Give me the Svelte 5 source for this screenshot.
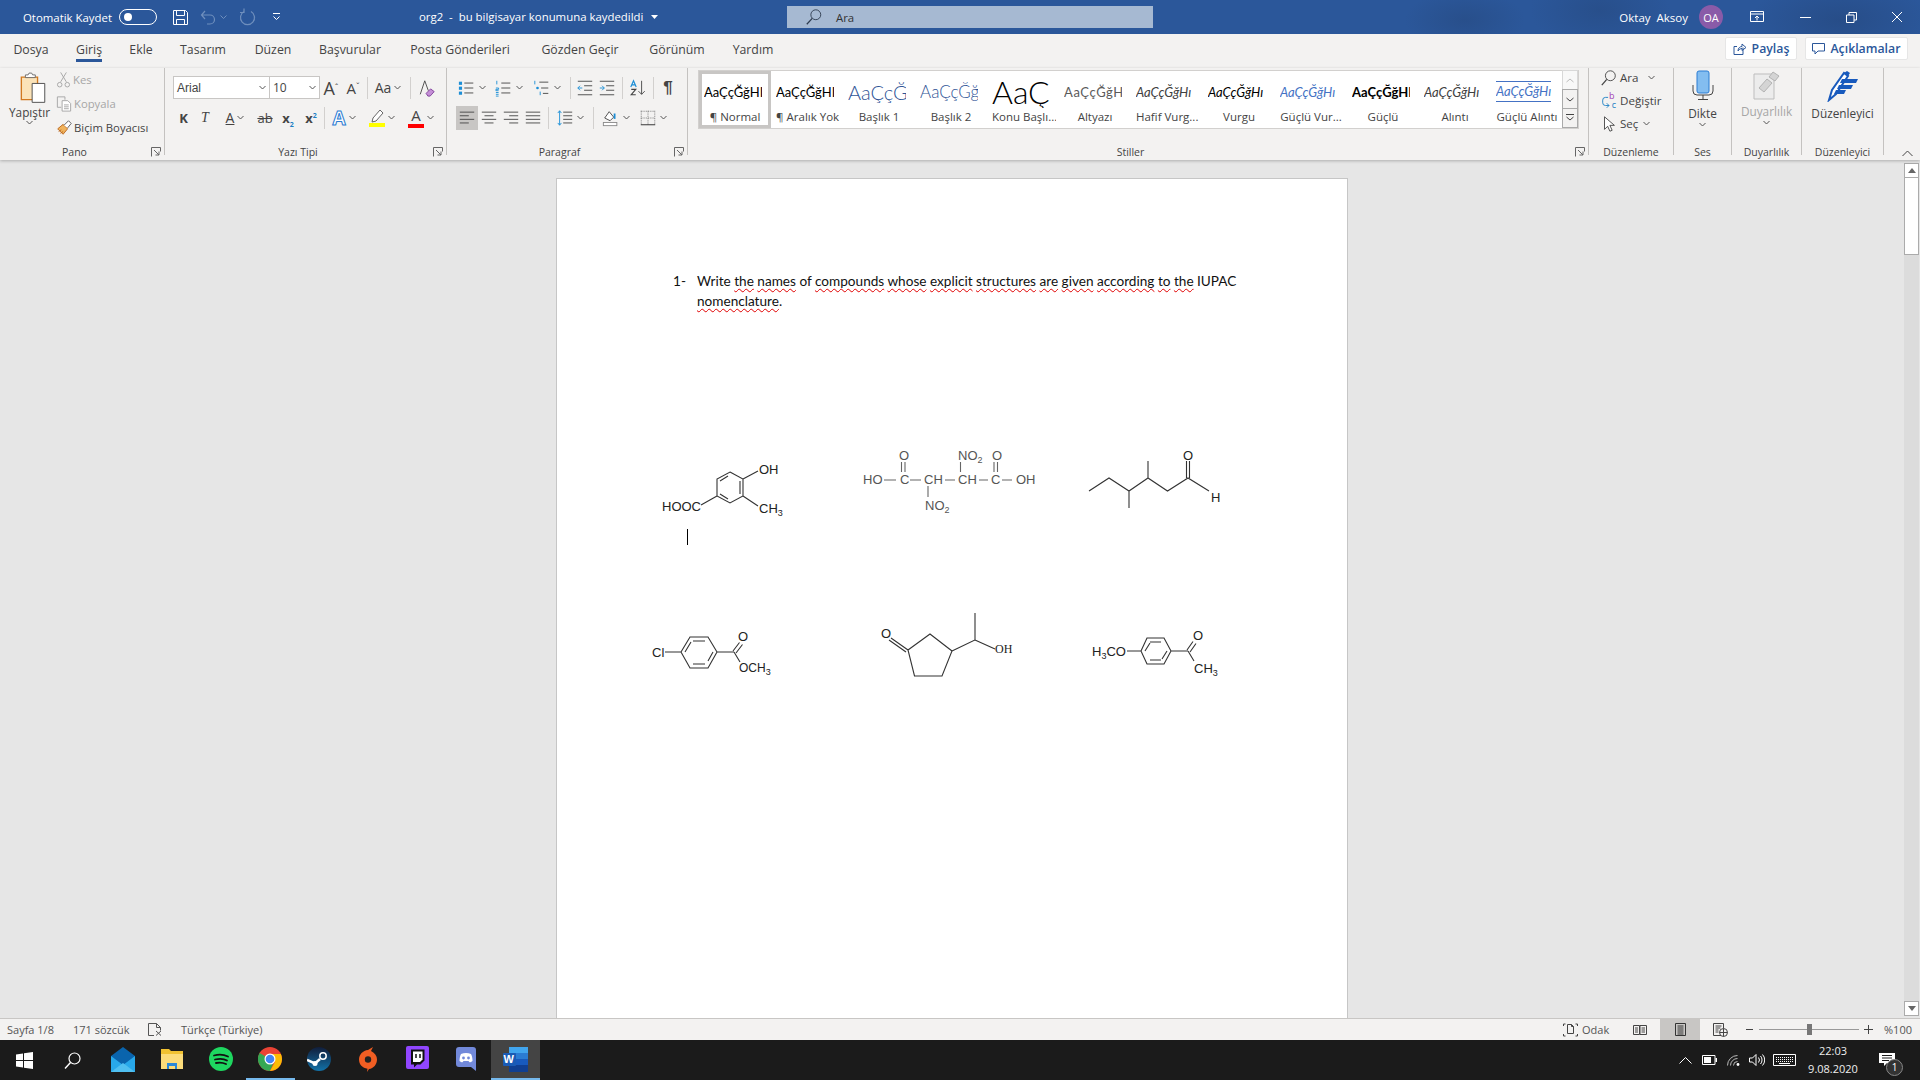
<script>
	const tabs = [
		{ t: 'Dosya', w: 54 },
		{ t: 'Giriş', w: 62, on: true },
		{ t: 'Ekle', w: 42 },
		{ t: 'Tasarım', w: 82 },
		{ t: 'Düzen', w: 58 },
		{ t: 'Başvurular', w: 96 },
		{ t: 'Posta Gönderileri', w: 124 },
		{ t: 'Gözden Geçir', w: 116 },
		{ t: 'Görünüm', w: 78 },
		{ t: 'Yardım', w: 74 }
	];

	const icons = {
		cut: '<path d="M6 2l6 10M12 2L6 12" stroke="#a6a6a6" fill="none"/><circle cx="5" cy="15" r="2.4" stroke="#a6a6a6" fill="none"/><circle cx="13" cy="15" r="2.4" stroke="#a6a6a6" fill="none"/>',
		copy: '<path d="M2.5 2.5h8v3M2.5 2.5v11h4" stroke="#a6a6a6" fill="none"/><path d="M7.5 6.5h6l3 3v8h-9z" fill="#fff" stroke="#a6a6a6"/><path d="M9.5 11h5M9.5 13h5M9.5 15h5" stroke="#a6a6a6"/>',
		brush: '<path d="M3 11l6-5 5 5-5 6z" fill="#f0b35c" stroke="#b9651e"/><path d="M10 7l5-5 3 3-4 5" fill="#fff" stroke="#555"/><path d="M4 14l3-2M6 16l3-2" stroke="#b9651e"/>',
		bullets: '<rect x="1" y="3" width="3.5" height="3.5" fill="#1c8ed6"/><rect x="1" y="8.5" width="3.5" height="3.5" fill="#1c8ed6"/><rect x="1" y="14" width="3.5" height="3.5" fill="#1c8ed6"/><path d="M7 4.5h10M7 10h10M7 15.500h10" stroke="#444"/>',
		numbers: '<path d="M2 2v4M1 10h3v1.500H1V13h3M1 15h3M1 17h3M1 19h3" stroke="#1c8ed6" fill="none"/><path d="M7 4.500h10M7 10h10M7 15.500h10" stroke="#444"/>',
		multi: '<path d="M2 2v4" stroke="#1c8ed6"/><path d="M7 3.500h10M9 10h8M11 16h6" stroke="#444"/><circle cx="5" cy="10" r="1.500" fill="#1c8ed6"/><path d="M8 14v4" stroke="#1c8ed6"/>',
		outdent: '<path d="M2 2.500h16M9 7.500h9M9 12.500h9M2 17.500h16" stroke="#444"/><path d="M7 10H2M4.500 7.500L2 10l2.500 2.500" stroke="#1c8ed6" fill="none"/>',
		indent: '<path d="M2 2.500h16M9 7.500h9M9 12.500h9M2 17.500h16" stroke="#444"/><path d="M2 10h5M4.500 7.500L7 10l-2.500 2.500" stroke="#1c8ed6" fill="none"/>',
		sort: '<path d="M14 2v15M10.500 13.500L14 17l3.500-3.500" stroke="#444" fill="none"/><path d="M2 9l3-7 3 7M3 6.500h4" stroke="#1c8ed6" fill="none" stroke-width="1.300"/><path d="M2.500 11.500h5l-5 6h5" stroke="#444" fill="none" stroke-width="1.300"/>',
		left: '<path d="M2 3.500h16M2 7.500h10M2 11.500h16M2 15.500h10" stroke="#444"/>',
		center: '<path d="M2 3.500h16M5 7.500h10M2 11.500h16M5 15.500h10" stroke="#444"/>',
		right: '<path d="M2 3.500h16M8 7.500h10M2 11.500h16M8 15.500h10" stroke="#444"/>',
		justify: '<path d="M2 3.500h16M2 7.500h16M2 11.500h16M2 15.500h16" stroke="#444"/>',
		spacing: '<path d="M8 3.500h10M8 7.500h10M8 11.500h10M8 15.500h10" stroke="#444"/><path d="M4 2v16M2 4.500L4 2l2 2.500M2 15.500L4 18l2-2.500" stroke="#1c8ed6" fill="none"/>',
		shade: '<path d="M3 10l5-7 5 6-4 4z" fill="#fff" stroke="#444"/><path d="M14 5v6" stroke="#1c8ed6" stroke-width="2"/><rect x="1.500" y="15" width="15" height="3.500" fill="#fff" stroke="#888"/>',
		borders: '<path d="M2 2.500h16M2 10h16M10 2v16M2.500 2v16M17.500 2v16" stroke="#777" stroke-dasharray="1 1"/><path d="M2 17.500h16" stroke="#222"/>',
		eraser: '<path d="M2.500 17L7.500 2l4 11" stroke="#444" fill="none"/><path d="M9 16l5-5 4 3-4.500 5H11z" fill="#c48ed6" stroke="#7d3c98"/>',
		search: '<circle cx="11.500" cy="7.500" r="5.500" stroke="#444" fill="none"/><path d="M7.500 11.500L2 18" stroke="#444" stroke-width="1.400"/>',
		replace: '<text x="10" y="8" font-size="10" fill="#a33fb5" font-family="Open Sans">b</text><text x="13" y="18" font-size="10" fill="#1c7fc4" font-family="Open Sans">c</text><path d="M9 6H6a3 3 0 0 0-3 3v3a3 3 0 0 0 3 3h4M7.500 12.500L10 15l-2.500 2.500" stroke="#1c7fc4" fill="none"/>',
		select: '<path d="M5 2v14l3.500-3.500 2.500 5.500 2.500-1-2.500-5.500H16z" fill="#fff" stroke="#444"/>'
	};

	const fontRow = [
		{ t: 'A', cls: 'grow', w: 20, sup: 'ˆ' },
		{ t: 'A', cls: 'shrink', w: 24, sup: 'ˇ' },
		{ sep: true, w: 5 },
		{ t: 'Aa', w: 36, chev: true },
		{ sep: true, w: 9 },
		{ i: 'eraser', w: 24 }
	];
	const fontRow2 = [
		{ t: 'K', cls: 'bold', w: 21 },
		{ t: 'T', cls: 'ital', w: 22 },
		{ t: 'A', cls: 'under', w: 38, chev: true },
		{ t: 'ab', cls: 'strike', w: 22 },
		{ t: 'x', cls: 'bold', sub: '2', w: 24 },
		{ t: 'x', cls: 'bold', sup2: '2', w: 22 },
		{ sep: true, w: 4 },
		{ t: 'A', cls: 'effect', w: 36, chev: true },
		{ mark: '#ffff00', w: 40, chev: true },
		{ t: 'A', cls: 'colour', w: 38, chev: true }
	];
	const paraRow = [
		{ i: 'bullets', w: 37, chev: true },
		{ i: 'numbers', w: 38, chev: true },
		{ i: 'multi', w: 38, chev: true },
		{ sep: true, w: 8 },
		{ i: 'outdent', w: 22 },
		{ i: 'indent', w: 22 },
		{ sep: true, w: 8 },
		{ i: 'sort', w: 24 },
		{ sep: true, w: 6 },
		{ t: '¶', cls: 'pilcrow', w: 24 }
	];
	const paraRow2 = [
		{ i: 'left', w: 22, on: true },
		{ i: 'center', w: 22 },
		{ i: 'right', w: 22 },
		{ i: 'justify', w: 22 },
		{ sep: true, w: 8 },
		{ i: 'spacing', w: 36, chev: true },
		{ sep: true, w: 10 },
		{ i: 'shade', w: 36, chev: true },
		{ i: 'borders', w: 38, chev: true }
	];

	const styles = [
		{ p: 'AaÇçĞğHIı', l: '¶ Normal', cls: 'normal', on: true },
		{ p: 'AaÇçĞğHIı', l: '¶ Aralık Yok', cls: 'normal' },
		{ p: 'AaÇçĞğ', l: 'Başlık 1', cls: 'h1' },
		{ p: 'AaÇçĞğH', l: 'Başlık 2', cls: 'h2' },
		{ p: 'AaÇ', l: 'Konu Başlı...', cls: 'title' },
		{ p: 'AaÇçĞğH', l: 'Altyazı', cls: 'sub' },
		{ p: 'AaÇçĞğHı', l: 'Hafif Vurg...', cls: 'soft' },
		{ p: 'AaÇçĞğHı', l: 'Vurgu', cls: 'em' },
		{ p: 'AaÇçĞğHı', l: 'Güçlü Vur...', cls: 'strongem' },
		{ p: 'AaÇçĞğHI', l: 'Güçlü', cls: 'strong' },
		{ p: 'AaÇçĞğHı', l: 'Alıntı', cls: 'quote' },
		{ p: 'AaÇçĞğHı', l: 'Güçlü Alıntı', cls: 'iquote' }
	];

	const apps = ['mail', 'folder', 'spotify', 'chrome', 'steam', 'origin', 'twitch', 'discord', 'word'];
</script>

{#snippet chevron()}
	<svg class="chev" width="7" height="5" viewBox="0 0 7 5"><path d="M.5 1l3 3 3-3" fill="none" stroke="#555" /></svg>
{/snippet}

{#snippet launcher()}
	<svg class="launcher" width="10" height="10" viewBox="0 0 10 10"><path d="M.5 9.500v-9h9v4M3 3l5 5M8 4.500V8H4.500" fill="none" stroke="#666" /></svg>
{/snippet}

{#snippet tools(list)}
	{#each list as b}
		{#if b.sep}
			<span class="tool-sep" style:width="{b.w}px"><i></i></span>
		{:else}
			<span class="tool" class:on={b.on} style:width="{b.w}px">
				{#if b.i}
					<svg width="18" height="18" viewBox="0 0 20 20">{@html icons[b.i]}</svg>
				{:else if b.mark}
					<span class="marker"><svg width="16" height="14" viewBox="0 0 16 14"><path d="M3 13l1-4 7-8 3 3-7 8z" fill="#fff" stroke="#666" /></svg><i style:background={b.mark}></i></span>
				{:else}
					<span class="glyph {b.cls ?? ''}">{b.t}{#if b.sup}<small>{b.sup}</small>{/if}{#if b.sub}<sub>{b.sub}</sub>{/if}{#if b.sup2}<sup>{b.sup2}</sup>{/if}</span>
				{/if}
				{#if b.chev}{@render chevron()}{/if}
			</span>
		{/if}
	{/each}
{/snippet}

<div class="word">
	<header class="titlebar">
		<div class="qat">
			<span class="autosave">Otomatik Kaydet</span>
			<span class="toggle"><i></i></span>
			<svg class="save" width="17" height="17" viewBox="0 0 17 17"><path d="M1.500 1.500h12l2 2v12h-14zM4.500 1.500v5h8v-5M4.500 15.500v-5h8v5" fill="none" stroke="#fff" /></svg>
			<svg class="undo" width="18" height="17" viewBox="0 0 18 17"><path d="M2 6h8a4 4 0 0 1 0 9H7M5 2L1.500 6 5 10" fill="none" stroke="#6f8fbd" stroke-width="1.200" /></svg>
			<svg class="smallchev" width="7" height="4" viewBox="0 0 7 4"><path d="M.5.500l3 3 3-3" fill="none" stroke="#6f8fbd" /></svg>
			<svg class="redo" width="17" height="18" viewBox="0 0 17 18"><path d="M12 3.500a7 7 0 1 1-7 0M5 .5v4H1" fill="none" stroke="#6f8fbd" stroke-width="1.200" /></svg>
			<svg class="custom" width="9" height="8" viewBox="0 0 9 8"><path d="M1 .5h7M1.500 3.500l3 3 3-3" fill="none" stroke="#fff" /></svg>
		</div>
		<div class="doc">org2 &nbsp;-&nbsp; bu bilgisayar konumuna kaydedildi<svg width="7" height="4" viewBox="0 0 7 4"><path d="M0 0h7L3.500 4z" fill="#fff" /></svg></div>
		<div class="searchbox">
			<svg width="18" height="18" viewBox="0 0 20 20"><circle cx="12" cy="7.500" r="5.500" fill="none" stroke="#2e3b4e" /><path d="M8 11.500L2 18" stroke="#2e3b4e" stroke-width="1.400" /></svg>
			<span>Ara</span>
		</div>
		<div class="right">
			<span class="user">Oktay &nbsp;Aksoy</span>
			<span class="avatar">OA</span>
			<svg class="display" width="14" height="12" viewBox="0 0 14 12"><path d="M.5.500h13v10H.5zM.5 3h13M7 9.500V5M5 7l2-2 2 2" fill="none" stroke="#fff" /></svg>
			<span class="winbtn"><svg width="11" height="11" viewBox="0 0 11 11"><path d="M0 5.500h11" stroke="#fff" /></svg></span>
			<span class="winbtn"><svg width="11" height="11" viewBox="0 0 11 11"><path d="M.5 3h7.500v7.500H.5zM3 3V.5h7.500V8H8" fill="none" stroke="#fff" /></svg></span>
			<span class="winbtn"><svg width="12" height="12" viewBox="0 0 12 12"><path d="M1 1l10 10M11 1L1 11" stroke="#fff" /></svg></span>
		</div>
	</header>

	<nav class="tabs">
		<div class="tablist">
			{#each tabs as tab}
				<span class="tab" class:active={tab.on} style:width="{tab.w}px"><span>{tab.t}</span></span>
			{/each}
		</div>
		<div class="actions">
			<span class="action share">
				<svg width="14" height="14" viewBox="0 0 14 14"><path d="M10 5.500v7H1v-8h3M5 9c0-3 2-4.500 4-4.500V2l4 3.500L9 8.500V6.500C7.500 6.500 6 7.500 5 9z" fill="none" stroke="#2b579a" /></svg>
				Paylaş
			</span>
			<span class="action comments">
				<svg width="13" height="13" viewBox="0 0 13 13"><path d="M.5 1.500h12v7.500H6L3 12V9H.5z" fill="none" stroke="#2b579a" /></svg>
				Açıklamalar
			</span>
		</div>
	</nav>

	<section class="ribbon">
		<div class="group pano">
			<div class="body pano-body">
				<div class="paste">
					<svg width="27" height="31" viewBox="0 0 30 34">
						<path d="M1.500 5.500h18v25h-18z" fill="#fbe3b8" stroke="#d2791f" stroke-width="1.500" />
						<path d="M6 6V3h3l1-2h3l1 2h3v3z" fill="#fff" stroke="#666" />
						<path d="M13.500 12.500h14v21h-14z" fill="#fff" stroke="#444" />
					</svg>
					<span>Yapıştır</span>
					{@render chevron()}
				</div>
				<div class="clip">
					<span class="off"><svg width="17" height="19" viewBox="0 0 18 19">{@html icons.cut}</svg>Kes</span>
					<span class="off"><svg width="18" height="19" viewBox="0 0 19 19">{@html icons.copy}</svg>Kopyala</span>
					<span><svg width="18" height="19" viewBox="0 0 20 19">{@html icons.brush}</svg>Biçim Boyacısı</span>
				</div>
			</div>
			<div class="label launch">Pano{@render launcher()}</div>
		</div>

		<div class="group yazi">
			<div class="body stack">
				<div class="row">
					<span class="select font-name">Arial{@render chevron()}</span>
					<span class="select font-size">10{@render chevron()}</span>
					{@render tools(fontRow)}
				</div>
				<div class="row second">{@render tools(fontRow2)}</div>
			</div>
			<div class="label launch">Yazı Tipi{@render launcher()}</div>
		</div>

		<div class="group paragraf">
			<div class="body stack">
				<div class="row first">{@render tools(paraRow)}</div>
				<div class="row second">{@render tools(paraRow2)}</div>
			</div>
			<div class="label launch">Paragraf{@render launcher()}</div>
		</div>

		<div class="group stiller">
			<div class="body">
				<div class="gallery">
					<div class="items">
						{#each styles as s}
							<div class="style" class:on={s.on}>
								<div class="preview {s.cls}"><span>{s.p}</span></div>
								<div class="style-name">{s.l}</div>
							</div>
						{/each}
					</div>
					<div class="scroller">
						<span class="disabled"><svg width="8" height="5" viewBox="0 0 8 5"><path d="M.5 4l3.500-3 3.500 3" fill="none" stroke="#bbb" /></svg></span>
						<span><svg width="8" height="5" viewBox="0 0 8 5"><path d="M.5 1l3.500 3 3.500-3" fill="none" stroke="#444" /></svg></span>
						<span><svg width="8" height="8" viewBox="0 0 8 8"><path d="M0 .5h8M.5 3l3.500 3 3.500-3" fill="none" stroke="#444" /></svg></span>
					</div>
				</div>
			</div>
			<div class="label launch">Stiller{@render launcher()}</div>
		</div>

		<div class="group duzenleme">
			<div class="body edit">
				<span><svg width="18" height="18" viewBox="0 0 20 20">{@html icons.search}</svg>Ara{@render chevron()}</span>
				<span><svg width="18" height="18" viewBox="0 0 20 20">{@html icons.replace}</svg>Değiştir</span>
				<span class="sec"><svg width="18" height="18" viewBox="0 0 20 20">{@html icons.select}</svg>Seç{@render chevron()}</span>
			</div>
			<div class="label">Düzenleme</div>
		</div>

		<div class="group ses">
			<div class="body big">
				<svg width="22" height="32" viewBox="0 0 22 32">
					<rect x="5" y="1" width="12" height="22" rx="2" fill="#83bdf0" stroke="#2b7cd3" />
					<path d="M1 15v6a4 4 0 0 0 4 4h12a4 4 0 0 0 4-4v-6M11 25v4M6 29.500h10" fill="none" stroke="#444" />
				</svg>
				<span>Dikte</span>
				{@render chevron()}
			</div>
			<div class="label">Ses</div>
		</div>

		<div class="group duyar">
			<div class="body big muted">
				<svg width="28" height="30" viewBox="0 0 28 30">
					<path d="M1 4h20v25H1z" fill="#ececec" stroke="#bdbdbd" />
					<path d="M6 18l8-9 5 4-8 9zM16 7l4-5 6 4-4 5z" fill="#d4d4d4" stroke="#b3b3b3" />
				</svg>
				<span>Duyarlılık</span>
				{@render chevron()}
			</div>
			<div class="label">Duyarlılık</div>
		</div>

		<div class="group duzen">
			<div class="body big">
				<svg width="32" height="32" viewBox="0 0 32 32">
					<path d="M2 30l3-10L17 3l4 3L9 24z" fill="#fff" stroke="#185abd" stroke-width="2" />
					<path d="M17 3l3-2 3 2-2 3zM15 9h16l-2 4H13zM12 15h14l-2 4H10zM9 20h10l-2 4H7z" fill="#185abd" />
				</svg>
				<span>Düzenleyici</span>
			</div>
			<div class="label">Düzenleyici</div>
		</div>

		<svg class="collapse" width="11" height="7" viewBox="0 0 11 7"><path d="M.5 6l5-5 5 5" fill="none" stroke="#444" /></svg>
	</section>

	<main class="canvas">
		<div class="area">
			<article class="page">
				<div class="question">
					<span class="num">1-</span>
					<p>
						Write <u>the</u> <u>names</u> of <u>compounds</u> <u>whose</u> <u>explicit</u> <u>structures</u> <u>are</u> <u>given</u> <u>according</u> <u>to</u> <u>the</u> IUPAC <u>nomenclature</u>.
					</p>
				</div>
				<svg class="figures" width="792" height="260" viewBox="555 440 792 260">
					<g fill="none" stroke="#333" stroke-width="1.100">
						<path d="M729 473l13 7v17l-13 7-13-7v-17zM727 477l-8 5M739 482v13M727 500l-8-5M742 480l15-8M742 497l15 10M716 497l-16 9" />
						<path d="M883 481h12M909 481h11M944 481h10M978 481h9M1001 481h10M900.500 463v10M904 463v10M959.500 463v10M993 463v10M996.500 463v10M927 487v11" stroke="#666" />
						<path d="M1088 492l20-13 20 13 19-13 19.500 13 20.500-13 21 13M1128 492v17M1147 479v-17M1185.500 479v-17M1188.500 479v-17" />
						<path d="M664 653h16M680 653l9-15h18l9 15-9 16h-18zM692 642h12M692 665h12M684 653l6-10M712 653l-5 9M716 653h17M732 652l6.500-8.500M735 654l6.500-8.500M733 653l6 10" />
						<path d="M907 651l22-16 22 17-10 25h-27.500zM907 651l-17-12M905 653l-17-12M951 652l23-11v-27M974 641l20 9" />
						<path d="M1126 652h14M1140 652l6-13h17l7 13-7 13h-17zM1149 643h11M1149 661h11M1144 652l5-8M1166 652l-5 8M1170 652h17M1186 651l6-8.500M1189 653l6-8.500M1187 652l6 10" />
					</g>
					<line x1="686.500" y1="530" x2="686.500" y2="546" stroke="#000" />
					<g class="chem">
						<text x="758" y="475">OH</text>
						<text x="661" y="512">HOOC</text>
						<text x="758" y="514">CH<tspan class="s" dy="3">3</tspan></text>
						<g class="grey">
							<text x="862" y="485">HO</text>
							<text x="899" y="485">C</text>
							<text x="923" y="485">CH</text>
							<text x="957" y="485">CH</text>
							<text x="990" y="485">C</text>
							<text x="1015" y="485">OH</text>
							<text x="898" y="461">O</text>
							<text x="957" y="461">NO<tspan class="s2" dy="3">2</tspan></text>
							<text x="991" y="461">O</text>
							<text x="924" y="511">NO<tspan class="s2" dy="3">2</tspan></text>
						</g>
						<text x="1182" y="461">O</text>
						<text x="1210" y="503">H</text>
						<text x="651" y="658">Cl</text>
						<text x="737" y="642">O</text>
						<text class="sm" x="738" y="673">OCH<tspan class="s" dy="3">3</tspan></text>
						<text x="880" y="639">O</text>
						<text class="serif" x="994" y="654">OH</text>
						<text x="1091" y="657">H<tspan class="s" dy="3">3</tspan><tspan dy="-3">CO</tspan></text>
						<text x="1192" y="641">O</text>
						<text x="1193" y="674">CH<tspan class="s" dy="3">3</tspan></text>
					</g>
				</svg>
			</article>
		</div>
		<aside class="scrollbar">
			<span class="arrow"><svg width="8" height="5" viewBox="0 0 8 5"><path d="M0 5l4-5 4 5z" fill="#666" /></svg></span>
			<span class="thumb"></span>
			<span class="fill"></span>
			<span class="arrow"><svg width="8" height="5" viewBox="0 0 8 5"><path d="M0 0l4 5 4-5z" fill="#666" /></svg></span>
		</aside>
	</main>

	<footer class="status">
		<div class="status-left">
			<span class="page-no">Sayfa 1/8</span>
			<span class="words">171 sözcük</span>
			<svg class="proof" width="15" height="13" viewBox="0 0 15 13"><path d="M6 12.500H.5V.5h8l4 4v3M8.500.5v4h4M8 8l5 4.500M13 8l-5 4.500" fill="none" stroke="#555" /></svg>
			<span>Türkçe (Türkiye)</span>
		</div>
		<div class="status-right">
			<span class="focus">
				<svg width="15" height="14" viewBox="0 0 15 14"><path d="M2.500 1H.5v2M12.500 1h2v2M2.500 13H.5v-2M12.500 13h2v-2M4.500 1.500h4l2 2v7h-6zM8.500 1.500v2h2" fill="none" stroke="#444" /></svg>
				Odak
			</span>
			<span class="view"><svg width="14" height="12" viewBox="0 0 14 12"><path d="M.5 1.500h6v9h-6zM7 1.500h6.500v9H7zM2 4h3M2 6h3M2 8h3M8.500 4h3.500M8.500 6h3.500M8.500 8h3.500" fill="none" stroke="#444" /></svg></span>
			<span class="view active"><svg width="11" height="13" viewBox="0 0 11 13"><path d="M.5.5h10v12H.5zM2.500 3h6M2.500 5h6M2.500 7h6M2.500 9h6M2.500 11h6" fill="none" stroke="#333" /></svg></span>
			<span class="view"><svg width="15" height="14" viewBox="0 0 15 14"><path d="M8 12.500H.5V.5h10v5M2.500 3h6M2.500 5h5M2.500 7h3M2.500 9h3" fill="none" stroke="#444" /><circle cx="10.500" cy="9.500" r="4" fill="none" stroke="#444" /><path d="M6.500 9.500h8M10.500 5.500v8" stroke="#444" /></svg></span>
			<span class="zoom">
				<svg width="7" height="7" viewBox="0 0 7 7"><path d="M0 3.500h7" stroke="#444" /></svg>
				<span class="slider"><i></i></span>
				<svg width="9" height="9" viewBox="0 0 9 9"><path d="M0 4.500h9M4.500 0v9" stroke="#444" /></svg>
			</span>
			<span class="percent">%100</span>
		</div>
	</footer>

	<div class="taskbar">
		<span class="start"><svg width="17" height="17" viewBox="0 0 17 17"><path d="M0 2.500l7-1v6.500H0zM8 1.300L17 0v8H8zM0 9h7v6.500l-7-1zM8 9h9v8l-9-1.300z" fill="#fff" /></svg></span>
		<span class="start"><svg width="17" height="17" viewBox="0 0 17 17"><circle cx="10.500" cy="6.500" r="5.500" fill="none" stroke="#fff" stroke-width="1.200" /><path d="M6.500 10.500L1 16.500" stroke="#fff" stroke-width="1.400" /></svg></span>
		<div class="apps">
			{#each apps as app}
				<span class="app" class:running={app === 'chrome' || app === 'word'} class:current={app === 'word'}>
					{#if app === 'mail'}
						<svg width="24" height="25" viewBox="0 0 24 25"><path d="M0 9L12 0l12 9v16H0z" fill="#0a64ad" /><path d="M0 9l12 9 12-9v16H0z" fill="#28a8ea" /><path d="M0 25l12-9 12 9z" fill="#50bff0" /></svg>
					{:else if app === 'folder'}
						<svg width="22" height="20" viewBox="0 0 22 20"><path d="M0 0h8l2 2h12v18H0z" fill="#f1c232" /><path d="M0 5h22v15H0z" fill="#fcdc7a" /><path d="M6 14h10v6h-2v-3H8v3H6z" fill="#2b88d8" /></svg>
					{:else if app === 'spotify'}
						<svg width="24" height="24" viewBox="0 0 24 24"><circle cx="12" cy="12" r="12" fill="#1ed760" /><path d="M5 8.500c5-1.500 10-1 14 1M6 12.500c4-1 9-.8 12 1M7 16c3.500-.8 7-.5 10 1" fill="none" stroke="#111" stroke-width="1.800" stroke-linecap="round" /></svg>
					{:else if app === 'chrome'}
						<svg width="24" height="24" viewBox="0 0 24 24"><circle cx="12" cy="12" r="12" fill="#ea4335" /><path d="M12 12L1.600 6A12 12 0 0 0 12 24l5-12z" fill="#34a853" /><path d="M12 7h10.900A12 12 0 0 1 12 24l5-9z" fill="#fbbc05" /><circle cx="12" cy="12" r="5.500" fill="#fff" /><circle cx="12" cy="12" r="4.300" fill="#4285f4" /></svg>
					{:else if app === 'steam'}
						<svg width="24" height="24" viewBox="0 0 24 24"><defs><linearGradient id="st" x1="0" y1="0" x2="0" y2="1"><stop offset="0" stop-color="#111d3a" /><stop offset="1" stop-color="#1272a8" /></linearGradient></defs><circle cx="12" cy="12" r="12" fill="url(#st)" /><circle cx="16" cy="9" r="3.200" fill="none" stroke="#fff" stroke-width="1.500" /><path d="M0 13l8 3.500L13 12" stroke="#fff" stroke-width="2.500" fill="none" /><circle cx="8" cy="16.500" r="2.500" fill="#fff" /></svg>
					{:else if app === 'origin'}
						<svg width="18" height="25" viewBox="0 0 18 25"><path d="M9 3l5-3-2 4c4 2 6 5 6 8.500 0 5-3.500 9-8 9.500l-2 3 .5-3.200C3.500 21 0 17.500 0 12.500 0 7.500 4 3.500 9 3z" fill="#f05e23" /><circle cx="9" cy="12.500" r="3.200" fill="#222" /></svg>
					{:else if app === 'twitch'}
						<svg width="23" height="26" viewBox="0 0 23 26"><rect width="23" height="23" rx="2" fill="#9146ff" /><path d="M5 3.500h13.500v11l-4 4H11L8 21.500v-3H5z" fill="#111" /><path d="M7 5.500h9.500v8l-2.500 2.500H7z" fill="#fff" /><path d="M10 8v4M14 8v4" stroke="#111" stroke-width="1.500" /></svg>
					{:else if app === 'discord'}
						<svg width="20" height="24" viewBox="0 0 20 24"><path d="M3 0h14a3 3 0 0 1 3 3v21l-5-4H3a3 3 0 0 1-3-3V3a3 3 0 0 1 3-3z" fill="#7289da" /><path d="M5 7c3-1.500 7-1.500 10 0 1 2 1.500 4 1.500 7-1 1-2 1.200-3 1.300l-1-1.300H7.500l-1 1.300c-1-.1-2-.3-3-1.300 0-3 .5-5 1.500-7z" fill="#fff" /><circle cx="7.500" cy="11" r="1.400" fill="#7289da" /><circle cx="12.500" cy="11" r="1.400" fill="#7289da" /></svg>
					{:else}
						<svg width="25" height="25" viewBox="0 0 25 25"><rect x="6" y="0" width="19" height="7" fill="#41a5ee" /><rect x="6" y="6" width="19" height="7" fill="#2b7cd3" /><rect x="6" y="12" width="19" height="7" fill="#185abd" /><rect x="6" y="18" width="19" height="7" fill="#103f91" /><rect x="0" y="6" width="13" height="13" rx="1" fill="#1a5bb5" /></svg>
						<b class="w">W</b>
					{/if}
				</span>
			{/each}
		</div>
		<div class="tray">
			<span class="slot wide24"><svg width="13" height="8" viewBox="0 0 13 8"><path d="M.5 7.500l6-6 6 6" fill="none" stroke="#fff" /></svg></span>
			<span class="slot wide24"><svg width="15" height="10" viewBox="0 0 15 10"><path d="M.5.5h12.500v9H.5z" fill="none" stroke="#fff" /><rect x="2" y="2" width="7" height="6" fill="#fff" /><rect x="13.500" y="3" width="1.500" height="4" fill="#fff" /></svg></span>
			<span class="slot wide25"><svg width="14" height="12" viewBox="0 0 14 12"><path d="M.5 11.500a10 10 0 0 1 10-10M3.500 11.500a7 7 0 0 1 7-7M6.500 11.500a4 4 0 0 1 4-4" fill="none" stroke="#bbb" /><circle cx="11" cy="10.500" r="1.400" fill="#fff" /></svg></span>
			<span class="slot wide21"><svg width="16" height="12" viewBox="0 0 16 12"><path d="M.5 4h3L7 .5v11L3.500 8h-3zM9.500 3.500a4 4 0 0 1 0 5M11.500 2a6 6 0 0 1 0 8M13.500.5a8 8 0 0 1 0 11" fill="none" stroke="#fff" /></svg></span>
			<span class="slot wide34"><svg width="23" height="12" viewBox="0 0 23 12"><path d="M.5.500h22v11H.5z" fill="none" stroke="#fff" /><path d="M3 3.500h17M3 5.500h17M3 7.500h17" stroke="#fff" stroke-dasharray="1 1" /><path d="M6 9.500h11" stroke="#fff" /></svg></span>
			<div class="clock"><span>22:03</span><span>9.08.2020</span></div>
			<span class="notif">
				<svg width="16" height="13" viewBox="0 0 16 13"><path d="M0 0h16v10H8l-3 3v-3H0z" fill="#fff" /><path d="M3 2.500h10M3 5h10M3 7.500h7" stroke="#1b1b1b" /></svg>
				<b>1</b>
			</span>
		</div>
	</div>
</div>

<style>
	:global(body) {
		margin: 0;
		overflow: hidden;
	}

	.word {
		width: 1920px;
		height: 1080px;
		display: flex;
		flex-direction: column;
		overflow: hidden;
		font-family: 'Open Sans', 'Noto Sans', sans-serif;
		font-size: 12px;
		color: #444;
		background: #e6e6e6;
	}

	.titlebar {
		height: 34px;
		flex: none;
		display: flex;
		align-items: center;
		color: #fff;
		background:
			radial-gradient(ellipse 60px 30px at 1465px 20px, #284f8b, transparent),
			radial-gradient(ellipse 70px 40px at 1600px 10px, #284f8b, transparent),
			radial-gradient(ellipse 90px 40px at 1840px 20px, #274d88, transparent),
			#2b579a;
	}

	.qat {
		width: 787px;
		flex: none;
		display: flex;
		align-items: center;
		padding-left: 23px;
		box-sizing: border-box;
	}

	.autosave {
		width: 96px;
		font-size: 11.400px;
		white-space: nowrap;
	}

	.toggle {
		width: 38px;
		height: 16px;
		box-sizing: border-box;
		border: 1px solid #fff;
		border-radius: 9px;
		display: flex;
		align-items: center;
		padding-left: 4px;
	}

	.toggle i {
		width: 8px;
		height: 8px;
		border-radius: 50%;
		background: #fff;
	}

	.save {
		margin-left: 15px;
	}

	.undo {
		margin-left: 11px;
	}

	.smallchev {
		margin-left: 2px;
	}

	.redo {
		margin-left: 12px;
	}

	.custom {
		margin-left: 16px;
	}

	.doc {
		position: absolute;
		left: 419px;
		top: 9px;
		font-size: 11.400px;
		white-space: nowrap;
	}

	.doc svg {
		margin-left: 8px;
		vertical-align: 2px;
	}

	.searchbox {
		width: 366px;
		height: 22px;
		flex: none;
		display: flex;
		align-items: center;
		gap: 13px;
		padding-left: 18px;
		box-sizing: border-box;
		background: #a6b9d2;
		color: #333;
		font-size: 11.400px;
	}

	.right {
		flex: 1;
		display: flex;
		align-items: center;
		justify-content: flex-end;
	}

	.user {
		font-size: 11.500px;
		margin-right: 11px;
	}

	.avatar {
		width: 24px;
		height: 24px;
		border-radius: 50%;
		background: #8a5ba8;
		font-size: 11px;
		display: flex;
		align-items: center;
		justify-content: center;
		margin-right: 27px;
	}

	.display {
		margin-right: 18px;
	}

	.winbtn {
		width: 46px;
		display: flex;
		justify-content: center;
	}

	.tabs {
		height: 34px;
		flex: none;
		display: flex;
		justify-content: space-between;
		background: #f3f2f1;
	}

	.tablist {
		display: flex;
		padding-left: 4px;
	}

	.tab {
		display: flex;
		justify-content: center;
		font-size: 12.300px;
		height: 32px;
		line-height: 32px;
		white-space: nowrap;
	}

	.tab.active span {
		height: 25px;
		line-height: 32px;
		border-bottom: 3px solid #2b579a;
	}

	.actions {
		display: flex;
		align-items: center;
		padding: 0 12px 5px 0;
	}

	.action {
		height: 23px;
		box-sizing: border-box;
		display: flex;
		align-items: center;
		justify-content: center;
		gap: 5px;
		background: #fff;
		border: 1px solid #e6e6e6;
		border-radius: 2px;
		color: #2b579a;
		font-size: 12.300px;
		font-weight: 600;
	}

	.share {
		width: 72px;
		margin-right: 8px;
	}

	.comments {
		width: 103px;
	}

	.ribbon {
		height: 92px;
		flex: none;
		display: flex;
		position: relative;
		background: #f3f2f1;
		box-shadow: 0 1px 3px rgba(0, 0, 0, 0.25);
		z-index: 1;
	}

	.group {
		height: 87px;
		box-sizing: border-box;
		border-right: 1px solid #c4c2c0;
		display: flex;
		flex-direction: column;
		flex: none;
	}

	.body {
		flex: 1;
		min-height: 0;
	}

	.label {
		height: 15px;
		margin-bottom: -5px;
		line-height: 15px;
		font-size: 10.500px;
		text-align: center;
		position: relative;
		color: #444;
	}

	.launch {
		padding-right: 15px;
	}

	.launcher {
		position: absolute;
		right: 3px;
		top: 2px;
	}

	.pano {
		width: 165px;
	}

	.pano-body {
		display: flex;
	}

	.paste {
		width: 57px;
		display: flex;
		flex-direction: column;
		align-items: center;
		padding: 4px 0 0 2px;
		font-size: 11.800px;
		box-sizing: border-box;
	}

	.paste svg:first-child {
		margin-left: 7px;
	}

	.paste span {
		margin-top: 2px;
		line-height: 15px;
	}

	.clip {
		display: flex;
		flex-direction: column;
		font-size: 11.300px;
		margin: -1px 0 0 -2px;
	}

	.clip span {
		height: 24px;
		flex: none;
		display: flex;
		align-items: center;
		gap: 1px;
		white-space: nowrap;
	}

	.clip .off {
		color: #a6a6a6;
	}

	.yazi {
		width: 282px;
	}

	.paragraf {
		width: 241px;
	}

	.stack {
		display: flex;
		flex-direction: column;
		padding-top: 8px;
		gap: 7px;
	}

	.row {
		height: 23px;
		display: flex;
		align-items: center;
		padding-left: 8px;
	}

	.paragraf .row {
		padding-left: 9px;
	}

	.paragraf .row.first {
		padding-left: 6px;
	}

	.select {
		height: 23px;
		box-sizing: border-box;
		background: #fff;
		border: 1px solid #c8c6c4;
		display: flex;
		align-items: center;
		justify-content: space-between;
		padding: 0 3px;
		font-size: 12px;
	}

	.font-name {
		width: 97px;
		font-family: 'Liberation Sans', sans-serif;
	}

	.font-size {
		width: 50px;
		border-left: 0;
		margin-right: 1px;
	}

	.tool {
		height: 24px;
		display: flex;
		align-items: center;
		justify-content: center;
		gap: 3px;
		flex: none;
	}

	.tool.on {
		background: #c8c6c4;
	}

	.tool-sep {
		flex: none;
		display: flex;
		justify-content: center;
	}

	.tool-sep i {
		width: 1px;
		height: 22px;
		background: #d2d0ce;
	}

	.glyph {
		font-size: 14px;
		line-height: 20px;
		color: #444;
		white-space: nowrap;
	}

	.glyph small {
		font-size: 9px;
		vertical-align: 4px;
	}

	.glyph sub,
	.glyph sup {
		font-size: 7px;
		color: #1c7fc4;
		line-height: 0;
	}

	.grow {
		font-size: 18px;
	}

	.shrink {
		font-size: 15px;
	}

	.bold {
		font-weight: 700;
		font-size: 13px;
	}

	.ital {
		font-style: italic;
		font-family: 'Liberation Serif', serif;
		font-size: 14px;
	}

	.under {
		text-decoration: underline;
	}

	.strike {
		text-decoration: line-through;
		font-size: 13px;
	}

	.effect {
		font-size: 19px;
		font-weight: 700;
		color: #fff;
		-webkit-text-stroke: 1px #2b7cd3;
	}

	.colour {
		display: block;
		width: 16px;
		text-align: center;
		font-size: 15px;
		line-height: 17px;
		border-bottom: 4px solid #ff0000;
	}

	.marker {
		display: flex;
		flex-direction: column;
		width: 16px;
	}

	.marker i {
		height: 4px;
	}

	.pilcrow {
		font-size: 17px;
		font-weight: 700;
		font-family: 'Liberation Sans', sans-serif;
	}

	.stiller {
		width: 901px;
	}

	.stiller .body {
		padding: 2px 9px 0 10px;
	}

	.gallery {
		height: 59px;
		display: flex;
		background: #fff;
		border: 1px solid #d2d0ce;
		box-sizing: border-box;
	}

	.items {
		display: flex;
		flex: 1;
	}

	.style {
		width: 72px;
		box-sizing: border-box;
		border: 3px solid transparent;
		text-align: center;
		overflow: hidden;
		flex: none;
		font-size: 11.500px;
		padding: 1px 2px 0;
	}

	.style.on {
		border-color: #c8c6c4;
	}

	.preview {
		height: 33px;
		display: flex;
		align-items: center;
		margin-right: 4px;
		overflow: hidden;
		white-space: nowrap;
		font-family: Lato, sans-serif;
		font-size: 13px;
		color: #000;
		justify-content: flex-start;
	}

	.preview span {
		display: block;
	}

	.h1 {
		font-size: 20px;
		font-weight: 300;
		color: #2f5496;
	}

	.h2 {
		font-size: 17px;
		font-weight: 300;
		color: #2f5496;
	}

	.title {
		font-size: 32px;
		font-weight: 300;
	}

	.sub {
		color: #5a5a5a;
		letter-spacing: 0.6px;
	}

	.soft {
		font-style: italic;
		color: #404040;
	}

	.em {
		font-style: italic;
	}

	.strongem {
		font-style: italic;
		color: #4472c4;
	}

	.strong {
		font-weight: 700;
	}

	.quote {
		font-style: italic;
		color: #404040;
	}

	.iquote {
		font-style: italic;
		color: #4472c4;
	}

	.iquote span {
		border-top: 1px solid #4472c4;
		border-bottom: 1px solid #4472c4;
		line-height: 19px;
	}

	.style-name {
		white-space: nowrap;
		line-height: 18px;
	}

	.scroller {
		width: 15px;
		display: flex;
		flex-direction: column;
		flex: none;
	}

	.scroller span {
		flex: 1;
		display: flex;
		align-items: center;
		justify-content: center;
		background: #f3f2f1;
		border: 1px solid #aaa;
		margin-left: -1px;
		margin-top: -1px;
	}

	.scroller .disabled {
		border-color: #d8d8d8;
		background: #f8f8f8;
	}

	.duzenleme {
		width: 85px;
	}

	.edit {
		display: flex;
		flex-direction: column;
		margin-top: -2px;
		padding-left: 11px;
		font-size: 11.600px;
	}

	.edit span {
		height: 23px;
		flex: none;
		display: flex;
		align-items: center;
		gap: 2px;
		white-space: nowrap;
	}

	.edit .chev {
		margin-left: 7px;
	}

	.edit .sec .chev {
		margin-left: 3px;
	}

	.ses {
		width: 58px;
	}

	.duyar {
		width: 70px;
	}

	.duzen {
		width: 82px;
	}

	.big {
		display: flex;
		flex-direction: column;
		align-items: center;
		padding-top: 2px;
		font-size: 11.800px;
	}

	.big span {
		margin-top: 2px;
		line-height: 18px;
		white-space: nowrap;
	}

	.muted {
		color: #a6a6a6;
	}

	.collapse {
		position: absolute;
		right: 7px;
		bottom: 3px;
	}

	.canvas {
		flex: 1;
		min-height: 0;
		display: flex;
		background: #e6e6e6;
	}

	.area {
		flex: 1;
		display: flex;
		justify-content: center;
		padding-top: 18px;
		overflow: hidden;
	}

	.page {
		width: 792px;
		height: 1100px;
		box-sizing: border-box;
		background: #fff;
		border: 1px solid #c6c6c6;
		flex: none;
	}

	.question {
		display: flex;
		padding: 92px 0 0 116px;
		font-family: Lato, sans-serif;
		font-size: 13.600px;
		line-height: 20px;
		color: #111;
	}

	.num {
		width: 24px;
		flex: none;
	}

	.question p {
		margin: 0;
		width: 560px;
	}

	.question u {
		text-decoration: underline wavy #e00000 1px;
		text-underline-offset: 2px;
	}

	.figures {
		display: block;
		margin: 128px 0 0 -1px;
	}

	.chem text {
		font-family: 'Liberation Sans', sans-serif;
		font-size: 13px;
		fill: #222;
	}

	.chem .grey text {
		fill: #555;
	}

	.chem .s,
	.chem .s2 {
		font-size: 9px;
	}

	.chem .sm {
		font-size: 12px;
	}

	.chem .serif {
		font-family: 'Liberation Serif', serif;
		font-size: 12px;
	}

	.scrollbar {
		width: 15px;
		margin: 3px 1px 2px 0;
		flex: none;
		display: flex;
		flex-direction: column;
		background: #dcdcdc;
		box-sizing: border-box;
	}

	.arrow {
		height: 15px;
		box-sizing: border-box;
		background: #fff;
		border: 1px solid #ababab;
		display: flex;
		align-items: center;
		justify-content: center;
		flex: none;
	}

	.thumb {
		height: 77px;
		box-sizing: border-box;
		background: #fff;
		border: 1px solid #ababab;
		border-top: 0;
		flex: none;
	}

	.fill {
		flex: 1;
	}

	.status {
		height: 22px;
		flex: none;
		display: flex;
		justify-content: space-between;
		align-items: center;
		background: #f3f2f1;
		border-top: 1px solid #c8c6c4;
		box-sizing: border-box;
		font-size: 11px;
		color: #555;
	}

	.status-left {
		display: flex;
		align-items: center;
		padding-left: 7px;
	}

	.page-no {
		width: 66px;
	}

	.words {
		width: 75px;
	}

	.proof {
		margin-right: 18px;
	}

	.status-right {
		display: flex;
		align-items: center;
		height: 100%;
	}

	.focus {
		display: flex;
		align-items: center;
		gap: 4px;
		width: 57px;
	}

	.view {
		width: 40px;
		height: 100%;
		display: flex;
		align-items: center;
		justify-content: center;
	}

	.view.active {
		background: #c8c6c4;
	}

	.zoom {
		display: flex;
		align-items: center;
		margin-left: 5.500px;
	}

	.slider {
		width: 100px;
		height: 1px;
		background: #999;
		display: flex;
		justify-content: center;
		align-items: center;
		margin: 0 4.500px 0 6.500px;
	}

	.slider i {
		width: 5px;
		height: 11px;
		background: #777;
	}

	.percent {
		width: 47.500px;
		text-align: right;
		padding-right: 8px;
		box-sizing: border-box;
	}

	.taskbar {
		height: 40px;
		flex: none;
		display: flex;
		align-items: center;
		background: #1b1b1b;
		color: #fff;
	}

	.start {
		width: 48px;
		display: flex;
		justify-content: center;
		flex: none;
	}

	.apps {
		display: flex;
		margin-left: 2.500px;
	}

	.app {
		width: 49px;
		height: 40px;
		box-sizing: border-box;
		display: flex;
		align-items: center;
		justify-content: center;
		position: relative;
		flex: none;
		border-bottom: 2px solid transparent;
	}

	.app.running {
		border-bottom-color: #76b9ed;
	}

	.app.current {
		background: #444;
	}

	.w {
		position: absolute;
		left: 13px;
		top: 13px;
		font-size: 11px;
		font-family: 'Liberation Sans', sans-serif;
		color: #fff;
	}

	.tray {
		margin-left: auto;
		display: flex;
		align-items: center;
		padding-right: 11px;
	}

	.slot {
		display: flex;
		justify-content: center;
		flex: none;
	}

	.wide24 {
		width: 24px;
	}

	.wide25 {
		width: 25px;
	}

	.wide21 {
		width: 21px;
	}

	.wide34 {
		width: 34px;
	}

	.clock {
		display: flex;
		flex-direction: column;
		align-items: center;
		width: 64px;
		font-size: 11px;
		line-height: 18px;
		color: #eee;
	}

	.notif {
		width: 44px;
		height: 40px;
		box-sizing: border-box;
		padding-top: 13px;
		display: flex;
		justify-content: center;
		align-items: flex-start;
		position: relative;
	}

	.notif b {
		position: absolute;
		left: 21px;
		top: 19px;
		width: 15px;
		height: 15px;
		border-radius: 50%;
		background: #333;
		border: 1px solid #888;
		font-size: 10px;
		font-weight: 400;
		line-height: 15px;
		text-align: center;
	}
</style>
